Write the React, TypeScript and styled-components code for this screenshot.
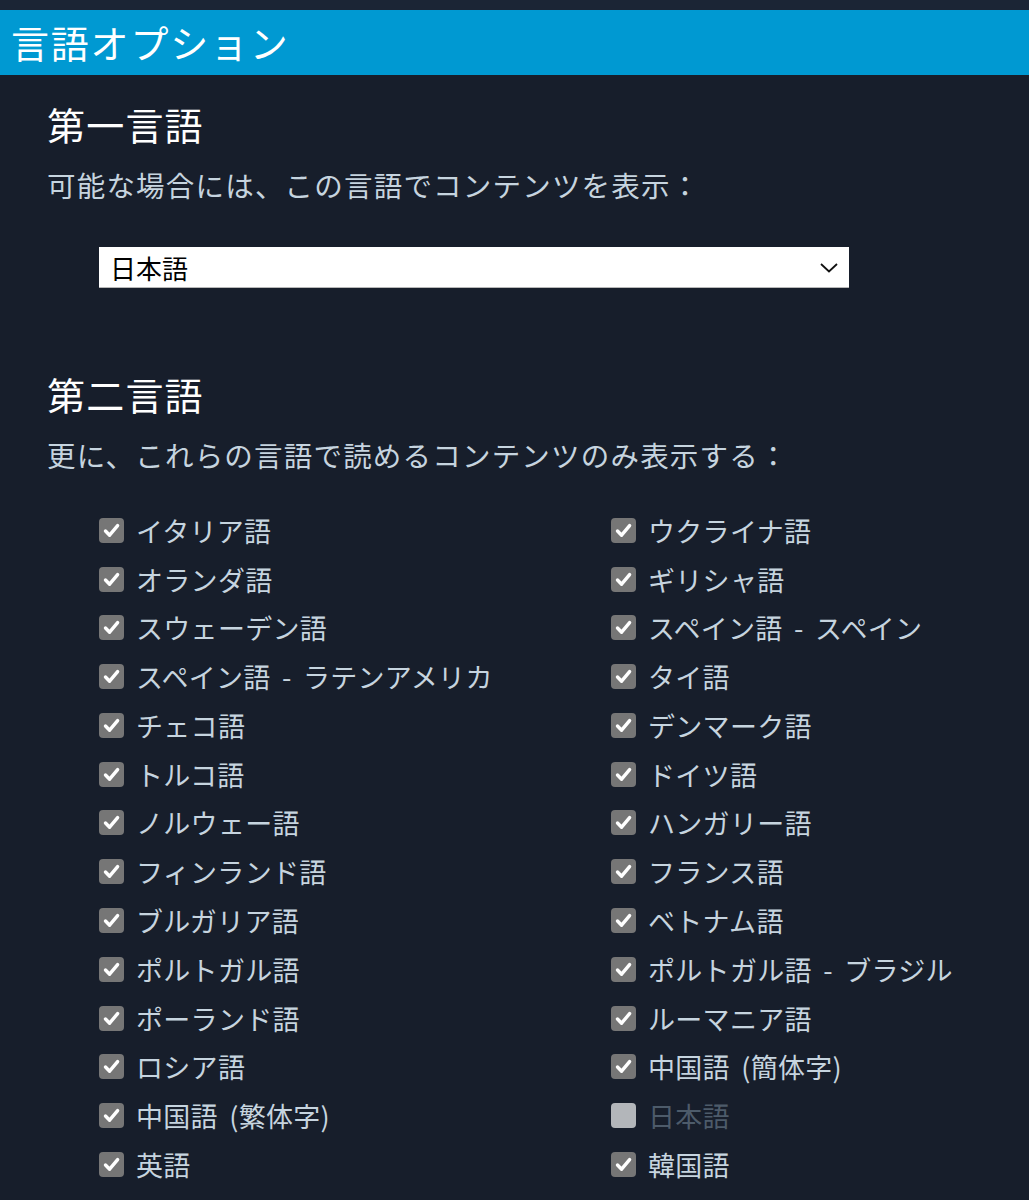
import React from 'react';
import styled, {createGlobalStyle} from 'styled-components';

const GlobalStyle = createGlobalStyle`
  html, body {
    margin: 0;
    padding: 0;
    background: #171e2b;
  }
  body {
    font-family: "Noto Sans CJK JP", "Noto Sans", sans-serif;
    color: #c6d4df;
  }
`;

type Lang = {label: string; checked: boolean; disabled?: boolean};

const LEFT: Lang[] = [
  {label: 'イタリア語', checked: true},
  {label: 'オランダ語', checked: true},
  {label: 'スウェーデン語', checked: true},
  {label: 'スペイン語 - ラテンアメリカ', checked: true},
  {label: 'チェコ語', checked: true},
  {label: 'トルコ語', checked: true},
  {label: 'ノルウェー語', checked: true},
  {label: 'フィンランド語', checked: true},
  {label: 'ブルガリア語', checked: true},
  {label: 'ポルトガル語', checked: true},
  {label: 'ポーランド語', checked: true},
  {label: 'ロシア語', checked: true},
  {label: '中国語 (繁体字)', checked: true},
  {label: '英語', checked: true},
];

const RIGHT: Lang[] = [
  {label: 'ウクライナ語', checked: true},
  {label: 'ギリシャ語', checked: true},
  {label: 'スペイン語 - スペイン', checked: true},
  {label: 'タイ語', checked: true},
  {label: 'デンマーク語', checked: true},
  {label: 'ドイツ語', checked: true},
  {label: 'ハンガリー語', checked: true},
  {label: 'フランス語', checked: true},
  {label: 'ベトナム語', checked: true},
  {label: 'ポルトガル語 - ブラジル', checked: true},
  {label: 'ルーマニア語', checked: true},
  {label: '中国語 (簡体字)', checked: true},
  {label: '日本語', checked: false, disabled: true},
  {label: '韓国語', checked: true},
];

const Check: React.FC<{checked: boolean; disabled?: boolean}> = ({
  checked,
  disabled,
}) => (
  <Box $disabled={disabled}>
    {checked && (
      <svg width="19" height="19" viewBox="0 0 19 19">
        <path
          d="M3.5 10 L7.6 14.2 L15.6 4.6"
          fill="none"
          stroke="#fff"
          strokeWidth="3.4"
          strokeLinecap="round"
          strokeLinejoin="round"
        />
      </svg>
    )}
  </Box>
);

const App: React.FC = () => {
  // interleave so grid fills row by row
  const items: Lang[] = [];
  LEFT.forEach((l, i) => {
    items.push(l);
    items.push(RIGHT[i]);
  });

  return (
    <>
      <GlobalStyle />
      <TopStrip />
      <Header>言語オプション</Header>
      <Content>
        <SectionTitle>第一言語</SectionTitle>
        <SectionText>可能な場合には、この言語でコンテンツを表示：</SectionText>
        <Select>
          <span>日本語</span>
          <svg width="20" height="12" viewBox="0 0 20 12">
            <polyline
              points="2,2 10,9.5 18,2"
              fill="none"
              stroke="#111"
              strokeWidth="1.8"
            />
          </svg>
        </Select>

        <SectionTitle $second>第二言語</SectionTitle>
        <SectionText>更に、これらの言語で読めるコンテンツのみ表示する：</SectionText>
        <LangGrid>
          {items.map(l => (
            <LangRow key={l.label} $disabled={l.disabled}>
              <Check checked={l.checked} disabled={l.disabled} />
              <span>{l.label}</span>
            </LangRow>
          ))}
        </LangGrid>
      </Content>
    </>
  );
};

const TopStrip = styled.div`
  height: 10px;
  background: #1b2535;
`;

const Header = styled.div`
  height: 65px;
  background: #0099d2;
  color: #fff;
  font-size: 38px;
  line-height: 63px;
  padding-left: 11px;
  letter-spacing: 1.8px;
`;

const Content = styled.div`
  padding: 0 0 0 47px;
  display: flex;
  flex-direction: column;
  align-items: flex-start;
`;

const SectionTitle = styled.h2<{$second?: boolean}>`
  margin: ${p => (p.$second ? '83px' : '26px')} 0 0 0;
  font-size: 38px;
  font-weight: 400;
  line-height: 46px;
  color: #fff;
  letter-spacing: 1.2px;
`;

const SectionText = styled.p`
  margin: 18px 0 0 0;
  font-size: 28.5px;
  line-height: 40px;
  letter-spacing: 1.2px;
  color: #c6d4df;
`;

const Select = styled.div`
  margin: 42px 0 0 52px;
  box-sizing: border-box;
  width: 750px;
  height: 41px;
  background: #fff;
  border-bottom: 1px solid #b8b8b8;
  display: flex;
  align-items: center;
  justify-content: space-between;
  padding: 0 10px 0 11px;
  color: #000;
  font-size: 26px;

  svg {
    margin-top: 2px;
  }
`;

const LangGrid = styled.div`
  margin: 31px 0 0 52px;
  display: grid;
  grid-template-columns: 512px 400px;
  grid-auto-rows: 48.77px;
`;

const LangRow = styled.div<{$disabled?: boolean}>`
  display: flex;
  align-items: center;
  gap: 12px;
  font-size: 27px;
  letter-spacing: 0.3px;
  word-spacing: 5px;
  white-space: nowrap;
  color: ${p => (p.$disabled ? '#4d5b6a' : '#c6d4df')};
`;

const Box = styled.div<{$disabled?: boolean}>`
  width: 25px;
  height: 25px;
  flex: none;
  border-radius: 4px;
  background: ${p => (p.$disabled ? '#b3b6ba' : '#767676')};
  display: flex;
  align-items: center;
  justify-content: center;
`;

export default App;
